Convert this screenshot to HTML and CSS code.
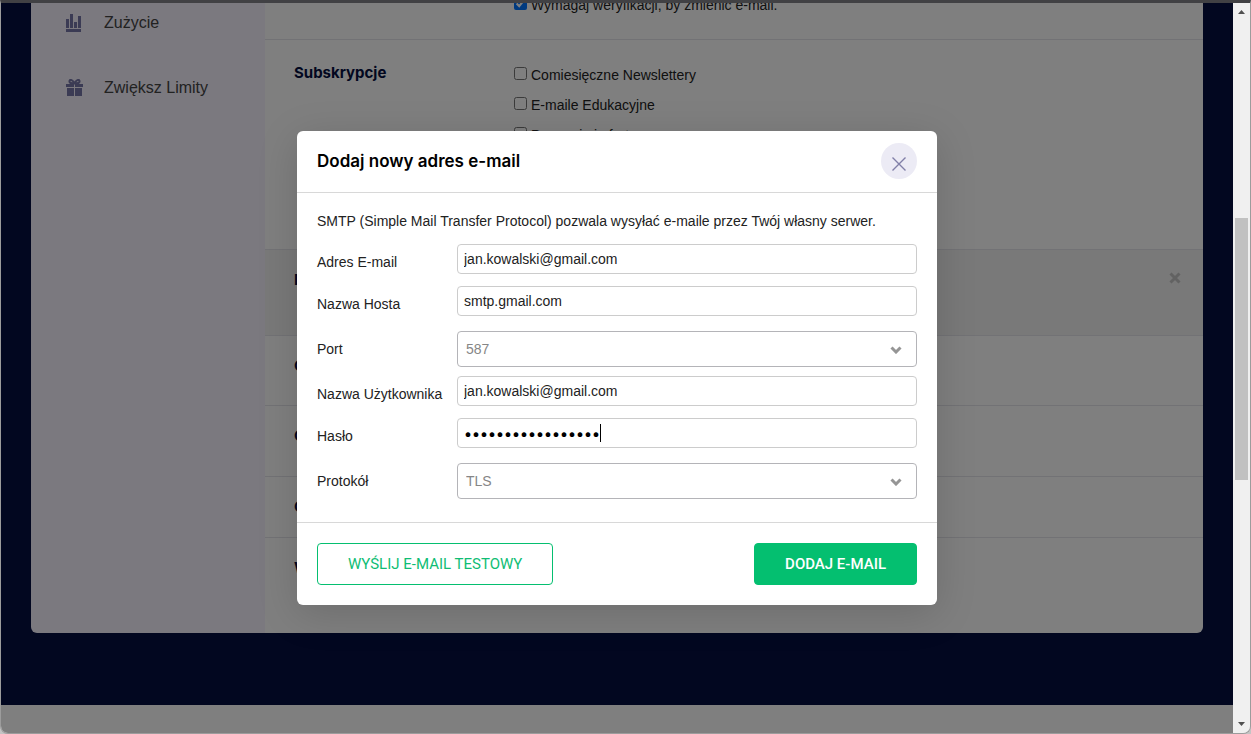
FILE: index.html
```html
<!DOCTYPE html>
<html lang="pl">
<head>
<meta charset="utf-8">
<title>Ustawienia konta</title>
<link rel="stylesheet" href="styles.css">
</head>
<body>
<div class="window">
  <div class="viewport">
    <div class="page">
      <div class="shell">
        <nav class="sidebar">
          <a class="nav-link" href="#usage">
            <svg class="nav-icon" viewBox="0 0 18 18" aria-hidden="true"><path d="M0 5h3v9H0zM4 0h3v14H4zM8 8h3v6H8zM12 2h3v12h-3zM0 15h15v3H0z"/></svg>
            <span>Zużycie</span>
          </a>
          <a class="nav-link" href="#limits">
            <svg class="nav-icon" viewBox="0 0 18 18" aria-hidden="true"><path d="M0 5h8v3H0zM9 5h8v3H9zM1 9h7v8H1zM9 9h7v8H9z"/><path class="bow" d="M8.500 4.500C7 1 4 0 3.500 2c-.3 2 1.500 2.500 5 2.500C10 1 13 0 13.500 2c.3 2-1.500 2.500-5 2.500"/></svg>
            <span>Zwiększ Limity</span>
          </a>
        </nav>
        <main class="content">
          <section class="row row-verify">
            <div class="row-options">
              <label class="check"><input type="checkbox" checked><span>Wymagaj weryfikacji, by zmienić e-mail.</span></label>
            </div>
          </section>
          <section class="row row-subs">
            <h2 class="row-title">Subskrypcje</h2>
            <div class="row-options">
              <label class="check"><input type="checkbox"><span>Comiesięczne Newslettery</span></label>
              <label class="check"><input type="checkbox"><span>E-maile Edukacyjne</span></label>
              <label class="check"><input type="checkbox"><span>Promocje i oferty</span></label>
            </div>
          </section>
          <section class="row row-active">
            <h2 class="row-title">D</h2>
            <button class="row-close" type="button" aria-label="Zamknij sekcję"><svg viewBox="0 0 12 12"><path d="M1.500 1.500l9 9M10.500 1.500l-9 9"/></svg></button>
          </section>
          <section class="row row-mid"><h2 class="row-title">C</h2></section>
          <section class="row row-mid"><h2 class="row-title">C</h2></section>
          <section class="row row-low"><h2 class="row-title">C</h2></section>
          <section class="row row-last"><h2 class="row-title">W</h2></section>
        </main>
      </div>
    </div>
    <div class="overlay">
      <form class="modal" role="dialog" aria-labelledby="modal-title">
        <header class="modal-head">
          <h1 class="modal-title" id="modal-title">Dodaj nowy adres e-mail</h1>
          <button class="modal-close" type="button" aria-label="Zamknij"><svg viewBox="0 0 14 14"><path d="M.5.5l13 13M13.500.5l-13 13"/></svg></button>
        </header>
        <div class="modal-body">
          <p class="intro">SMTP (Simple Mail Transfer Protocol) pozwala wysyłać e-maile przez Twój własny serwer.</p>
          <div class="field"><label for="email">Adres E-mail</label><input class="text" id="email" type="text" value="jan.kowalski@gmail.com"></div>
          <div class="field"><label for="host">Nazwa Hosta</label><input class="text" id="host" type="text" value="smtp.gmail.com"></div>
          <div class="field field-select"><label for="port">Port</label>
            <div class="select-wrap"><select id="port"><option>587</option></select><svg class="chevron" viewBox="0 0 12 8"><path d="M1.500 1.500L6 6l4.500-4.500"/></svg></div></div>
          <div class="field"><label for="user">Nazwa Użytkownika</label><input class="text" id="user" type="text" value="jan.kowalski@gmail.com"></div>
          <div class="field"><label for="pass">Hasło</label>
            <div class="pass-wrap"><input class="text password" id="pass" type="password" value="kowalski123456789"><span class="caret"></span></div></div>
          <div class="field field-select"><label for="proto">Protokół</label>
            <div class="select-wrap"><select id="proto"><option>TLS</option></select><svg class="chevron" viewBox="0 0 12 8"><path d="M1.500 1.500L6 6l4.500-4.500"/></svg></div></div>
        </div>
        <footer class="modal-foot">
          <button class="btn btn-outline" type="button">WYŚLIJ E-MAIL TESTOWY</button>
          <button class="btn btn-primary" type="submit">DODAJ E-MAIL</button>
        </footer>
      </form>
    </div>
  </div>
  <div class="scrollbar" aria-hidden="true">
    <svg class="arrow" viewBox="0 0 17 17"><path d="M5 11h7L8.500 7z"/></svg>
    <div class="track"><span class="before"></span><span class="thumb"></span><span class="after"></span></div>
    <svg class="arrow" viewBox="0 0 17 17"><path d="M5 6h7l-3.500 4z"/></svg>
  </div>
</div>
</body>
</html>
```
FILE: styles.css
```css
* { box-sizing: border-box; }

body {
  margin: 0;
  height: 100vh;
  background: #c4c4c4;
  font-family: "Liberation Sans", Arial, sans-serif;
  font-size: 14px;
  color: #222;
}

h1, h2, p { margin: 0; }
button, input, select { font: inherit; margin: 0; }

/* Browser window frame */
.window {
  display: flex;
  height: 100vh;
  border: 1px solid #9c9c9c;
  border-top: 3px solid #414144;
  border-radius: 0 0 8px 8px;
  overflow: hidden;
}
.viewport { position: relative; flex: 1; min-width: 0; overflow: hidden; }

/* Settings page */
.page { display: flex; flex-direction: column; height: 100%; background: #fff; }
.shell { display: flex; background: #040e40; padding: 0 30px 72px; overflow: hidden; }
.sidebar {
  flex: none;
  width: 234px;
  background: #f6f2fe;
  border-bottom-left-radius: 6px;
  font-size: 16px;
}
.nav-link {
  display: flex;
  align-items: center;
  gap: 20px;
  height: 65px;
  padding-left: 35px;
  color: #444;
  text-decoration: none;
}
.nav-link:first-child { height: 52px; padding-bottom: 12px; }
.nav-icon { width: 18px; height: 18px; fill: #7676a8; }
.nav-icon .bow { fill: none; stroke: #7676a8; stroke-width: 2; }

.content {
  flex: 1;
  background: #fff;
  border-bottom-right-radius: 6px;
  overflow: hidden;
}
.row { display: flex; padding: 0 22px 0 29px; border-bottom: 1px solid #e4e4ea; }
.row-title {
  width: 220px;
  font-family: Inter, sans-serif;
  font-size: 15px;
  line-height: 28px;
  font-weight: 700;
  color: #040e40;
}
.row-options { display: flex; flex-direction: column; }
.check { display: flex; align-items: center; gap: 4px; height: 30px; }
.check span { padding-top: 2px; }
.check input { width: 13px; height: 13px; margin: 0 0 2px; }
.row-verify { height: 37px; align-items: flex-end; padding: 0 29px 20px 249px; }
.row-subs { height: 210px; padding-top: 19px; }
.row-active { height: 86px; padding-top: 16px; justify-content: space-between; background: #f2f2f2; }
.row-close { width: 12px; height: 24px; padding: 0; border: 0; background: none; }
.row-close svg { display: block; width: 12px; height: 12px; fill: none; stroke: #c4c4c4; stroke-width: 3; }
.row-mid { height: 70px; padding-top: 16px; }
.row-mid + .row-mid { height: 71px; }
.row-low { height: 61px; padding-top: 16px; }
.row-last { height: 95px; padding-top: 16px; border: 0; }

/* Dialog */
.overlay {
  position: absolute;
  inset: 0;
  display: flex;
  align-items: center;
  justify-content: center;
  background: rgba(0, 0, 0, .5);
}
.modal {
  width: 640px;
  max-width: 100%;
  background: #fff;
  border-radius: 6px;
  box-shadow: 0 8px 40px rgba(0, 0, 0, .15);
}
.modal-head {
  display: flex;
  align-items: center;
  justify-content: space-between;
  height: 62px;
  padding: 0 20px 2px;
  border-bottom: 1px solid #d8d8d8;
}
.modal-title { font-family: Inter, sans-serif; font-size: 17px; font-weight: 600; color: #000; }
.modal-close {
  display: flex;
  align-items: center;
  justify-content: center;
  width: 36px;
  height: 36px;
  padding: 6px 0 0;
  border: 0;
  border-radius: 50%;
  background: #ecebf5;
}
.modal-close svg { width: 14px; height: 14px; fill: none; stroke: #817fa8; stroke-width: 1.400; }

.modal-body { padding: 16px 20px 14px; border-bottom: 1px solid #d8d8d8; }
.intro { line-height: 24px; margin-bottom: 11px; }
.field { display: flex; height: 42px; }
.field label { flex: none; width: 140px; line-height: 36px; white-space: nowrap; }
.text {
  flex: 1;
  width: 100%;
  min-width: 0;
  height: 30px;
  padding: 0 6px;
  border: 1px solid #ccc;
  border-radius: 4px;
  background: #fff;
  color: #222;
}
.field-select { height: 48px; padding-top: 3px; }
.select-wrap, .pass-wrap { position: relative; flex: 1; }
.select-wrap select {
  display: block;
  width: 100%;
  height: 36px;
  padding: 0 8px;
  border: 1px solid #b4b4b8;
  border-radius: 4px;
  appearance: none;
  background: #fff;
  color: #868686;
}
.chevron {
  position: absolute;
  right: 15px;
  top: 15px;
  width: 12px;
  height: 8px;
  fill: none;
  stroke: #959595;
  stroke-width: 3;
}
.password { font-family: Inter, sans-serif; font-size: 15px; font-weight: 500; color: #000; }
.caret { position: absolute; left: 143px; top: 6px; width: 1px; height: 18px; background: #000; }

.modal-foot { display: flex; justify-content: space-between; padding: 20px; }
.btn {
  height: 42px;
  padding: 0 30px;
  border: 1px solid #04bf70;
  border-radius: 4px;
  font-family: Roboto, sans-serif;
  font-size: 15px;
  font-weight: 400;
}
.btn-outline { background: #fff; color: #0fbd74; }
.btn-primary { background: #04bf70; color: #fff; font-weight: 500; }

/* Scrollbar */
.scrollbar { display: flex; flex-direction: column; flex: none; width: 17px; background: #f0f0f0; }
.arrow { width: 17px; height: 17px; fill: #505050; }
.track { display: flex; flex-direction: column; flex: 1; padding: 0 2px; }
.before { flex: 198; }
.thumb { flex: 262; background: #c1c1c1; }
.after { flex: 236; }
```
